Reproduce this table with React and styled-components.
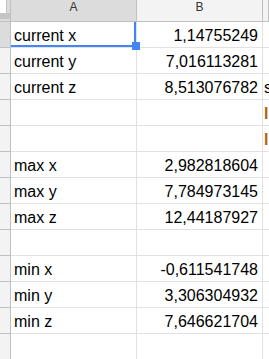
import React from "react";
import styled, { createGlobalStyle } from "styled-components";

const GlobalStyle = createGlobalStyle`
  html, body {
    margin: 0;
    padding: 0;
    background: #ffffff;
    overflow: hidden;
  }
  * { box-sizing: border-box; }
`;

const Sheet = styled.div`
  position: relative;
  display: grid;
  grid-template-columns: 11px 126px 126px 1fr;
  grid-template-rows: 22px repeat(13, 26px);
  width: 269px;
  height: 359px;
  overflow: hidden;
  font-family: "Liberation Sans", Arial, sans-serif;
`;

const Corner = styled.div`
  display: flex;
  flex-direction: column;
  background: #dcdcdc;
  border-right: 1px solid #c0c0c0;
  border-bottom: 1px solid #c0c0c0;
`;

const CornerTop = styled.div`
  display: flex;
  height: 13px;
`;

const CornerBox = styled.div`
  width: 7px;
  height: 13px;
  background: #ffffff;
  border-right: 1px solid #c4c4c4;
`;

const CornerBar = styled.div`
  height: 6px;
  background: #c4c4c4;
`;

const ColHeader = styled.div`
  display: flex;
  justify-content: center;
  align-items: flex-start;
  font-size: 12px;
  line-height: 14px;
  color: #333333;
  background: ${(p) => (p.$active ? "#dcdcdc" : "#f3f3f3")};
  border-right: 1px solid #c0c0c0;
  border-bottom: 1px solid #c0c0c0;
`;

const RowHeader = styled.div`
  background: ${(p) => (p.$active ? "#dcdcdc" : "#f3f3f3")};
  border-right: 1px solid #c0c0c0;
  border-bottom: 1px solid #c0c0c0;
`;

const Cell = styled.div`
  display: flex;
  align-items: flex-end;
  justify-content: ${(p) => (p.$num ? "flex-end" : "flex-start")};
  padding: 0 ${(p) => (p.$num ? "4px" : "3px")} 2px;
  font-size: 16px;
  font-weight: ${(p) => (p.$bold ? 700 : 400)};
  color: ${(p) => p.$color || "#000000"};
  white-space: nowrap;
  overflow: hidden;
  border-right: 1px solid #e2e2e2;
  border-bottom: 1px solid #e2e2e2;
`;

const EdgeCell = styled(Cell)`
  padding-left: 1px;
  border-right: none;
`;

/* selection frame for the active cell: right and bottom edges plus fill handle */
const SelRight = styled.div`
  position: absolute;
  left: 134px;
  top: 22px;
  width: 2px;
  height: 25px;
  background: #4285f4;
`;

const SelBottom = styled.div`
  position: absolute;
  left: 11px;
  top: 45px;
  width: 125px;
  height: 2px;
  background: #4285f4;
`;

const FillHandle = styled.div`
  position: absolute;
  left: 132px;
  top: 42px;
  width: 8px;
  height: 8px;
  background: #4285f4;
`;

const rows = [
  { label: "current x", value: "1,14755249" },
  { label: "current y", value: "7,016113281" },
  { label: "current z", value: "8,513076782", extra: "s" },
  { label: "", value: "", extra: "l", extraColor: "#b45f06", bold: true },
  { label: "", value: "", extra: "l", extraColor: "#b45f06", bold: true },
  { label: "max x", value: "2,982818604" },
  { label: "max y", value: "7,784973145" },
  { label: "max z", value: "12,44187927" },
  { label: "", value: "" },
  { label: "min x", value: "-0,611541748" },
  { label: "min y", value: "3,306304932" },
  { label: "min z", value: "7,646621704" },
  { label: "", value: "" },
];

export default function App() {
  return (
    <>
      <GlobalStyle />
      <Sheet>
        <Corner>
          <CornerTop>
            <CornerBox />
          </CornerTop>
          <CornerBar />
        </Corner>
        <ColHeader $active>A</ColHeader>
        <ColHeader>B</ColHeader>
        <ColHeader />
        {rows.map((r, i) => (
          <React.Fragment key={i}>
            <RowHeader $active={i === 0} />
            <Cell>{r.label}</Cell>
            <Cell $num>{r.value}</Cell>
            <EdgeCell $color={r.extraColor} $bold={r.bold}>
              {r.extra || ""}
            </EdgeCell>
          </React.Fragment>
        ))}
        <SelRight />
        <SelBottom />
        <FillHandle />
      </Sheet>
    </>
  );
}
